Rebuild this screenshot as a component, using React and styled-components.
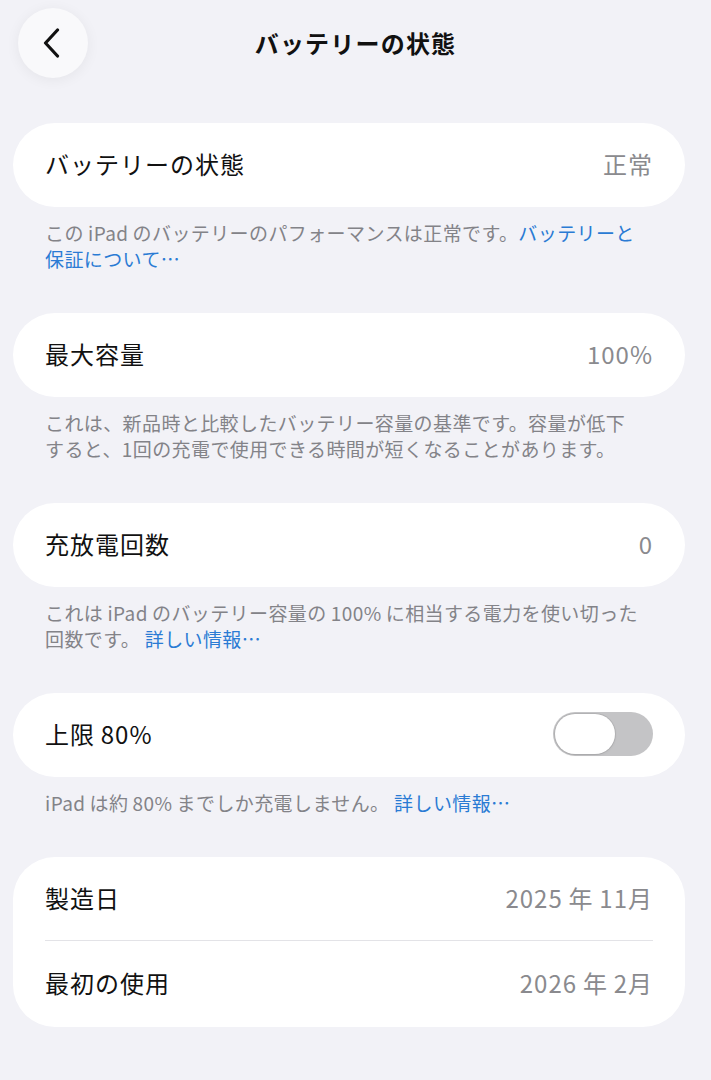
import React, { useState } from 'react';
import styled, { createGlobalStyle } from 'styled-components';

const GlobalStyle = createGlobalStyle`
  html, body {
    margin: 0;
    padding: 0;
    background: #f2f2f7;
  }
  body {
    font-family: "Noto Sans CJK JP", "Noto Sans", sans-serif;
    color: #111;
    -webkit-font-smoothing: antialiased;
  }
`;

const App = () => {
  const [limit, setLimit] = useState(false);

  return (
    <Page>
      <GlobalStyle />
      <Header>
        <BackButton aria-label="戻る">
          <svg width="18" height="30" viewBox="0 0 18 30" fill="none">
            <path d="M14.5 2L2.5 15l12 13" stroke="#111" strokeWidth="3.2" strokeLinecap="round" strokeLinejoin="round" />
          </svg>
        </BackButton>
        <Title>バッテリーの状態</Title>
        <span />
      </Header>

      <Content>
        <Section>
          <Card>
            <Row>
              <Label>バッテリーの状態</Label>
              <Value>正常</Value>
            </Row>
          </Card>
          <Footer>
            この&#8201;iPad&#8201;のバッテリーのパフォーマンスは正常です。<Link>バッテリーと保証について…</Link>
          </Footer>
        </Section>

        <Section>
          <Card>
            <Row>
              <Label>最大容量</Label>
              <Value>100%</Value>
            </Row>
          </Card>
          <Footer>
            これは、新品時と比較したバッテリー容量の基準です。容量が低下すると、1回の充電で使用できる時間が短くなることがあります。
          </Footer>
        </Section>

        <Section>
          <Card>
            <Row>
              <Label>充放電回数</Label>
              <Value>0</Value>
            </Row>
          </Card>
          <Footer>
            これは&#8201;iPad&#8201;のバッテリー容量の&#8201;100%&#8201;に相当する電力を使い切った回数です。 <Link>詳しい情報…</Link>
          </Footer>
        </Section>

        <Section>
          <Card>
            <Row>
              <Label>上限&#8201;80%</Label>
              <Toggle $on={limit} onClick={() => setLimit(!limit)} aria-label="上限80%">
                <Knob $on={limit} />
              </Toggle>
            </Row>
          </Card>
          <Footer>
            iPad&#8201;は約&#8201;80%&#8201;までしか充電しません。 <Link>詳しい情報…</Link>
          </Footer>
        </Section>

        <Section>
          <Card>
            <Row $divider>
              <Label>製造日</Label>
              <Value>2025&#8201;年&#8201;11月</Value>
            </Row>
            <Row>
              <Label>最初の使用</Label>
              <Value>2026&#8201;年&#8201;2月</Value>
            </Row>
          </Card>
        </Section>
      </Content>
    </Page>
  );
};

export default App;

const Page = styled.div`
  min-height: 1080px;
  background: #f2f2f7;
`;

const Header = styled.header`
  height: 88px;
  padding: 0 18px;
  display: grid;
  grid-template-columns: 1fr auto 1fr;
  align-items: center;
`;

const BackButton = styled.button`
  width: 70px;
  height: 70px;
  margin-top: -2px;
  border: none;
  border-radius: 50%;
  background: #f9f9fb;
  box-shadow: 0 2px 14px rgba(0, 0, 0, 0.06);
  display: flex;
  align-items: center;
  justify-content: center;
  padding: 0 3px 0 0;
  cursor: pointer;
`;

const Title = styled.h1`
  margin: 0 0 4px;
  font-size: 24px;
  font-weight: 700;
  color: #111;
  letter-spacing: 1.2px;
`;

const Content = styled.main`
  padding: 35px 26px 40px 13px;
  display: flex;
  flex-direction: column;
  gap: 41px;
`;

const Section = styled.section`
  display: flex;
  flex-direction: column;
`;

const Card = styled.div`
  background: #fff;
  border-radius: 42px;
  padding: 0 32px;
`;

const Row = styled.div`
  height: 84px;
  padding-bottom: 3px;
  display: flex;
  align-items: center;
  justify-content: space-between;
  border-bottom: ${(p) => (p.$divider ? '1.5px solid #e3e3e7' : 'none')};
  box-sizing: border-box;
  & + & {
    height: 86px;
  }
`;

const Label = styled.span`
  font-size: 24px;
  letter-spacing: 1px;
  color: #111;
`;

const Value = styled.span`
  font-size: 24px;
  letter-spacing: 1px;
  color: #8a8a8e;
`;

const Footer = styled.p`
  margin: 0;
  padding: 13px 45px 0 32px;
  font-size: 19px;
  line-height: 26px;
  letter-spacing: 0.4px;
  color: #838388;
`;

const Link = styled.a`
  color: #2a7bd4;
  cursor: pointer;
`;

const Toggle = styled.button`
  width: 100px;
  height: 44px;
  border: none;
  border-radius: 22px;
  padding: 2px;
  background: ${(p) => (p.$on ? '#34c759' : '#c4c4c6')};
  display: flex;
  justify-content: ${(p) => (p.$on ? 'flex-end' : 'flex-start')};
  cursor: pointer;
`;

const Knob = styled.span`
  width: 60px;
  height: 40px;
  border-radius: 20px;
  background: #fff;
  box-shadow: 0 0 0 1px rgba(0, 0, 0, 0.08), 0 1px 3px rgba(0, 0, 0, 0.08);
`;
